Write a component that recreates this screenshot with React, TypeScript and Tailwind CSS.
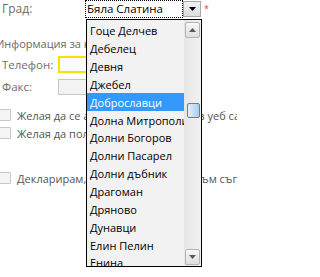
const cities = [
  "Гоце Делчев",
  "Дебелец",
  "Девня",
  "Джебел",
  "Доброславци",
  "Долна Митрополия",
  "Долни Богоров",
  "Долни Пасарел",
  "Долни дъбник",
  "Драгоман",
  "Дряново",
  "Дунавци",
  "Елин Пелин",
  "Енина",
]

function Triangle({ up, color }: { up?: boolean; color: string }) {
  return (
    <svg width="7" height="4" viewBox="0 0 7 4">
      <polygon points={up ? "0,4 7,4 3.5,0" : "0,0 7,0 3.5,4"} fill={color} />
    </svg>
  )
}

function ScrollButton({ up }: { up?: boolean }) {
  return (
    <div className="flex h-[16px] w-[15px] items-center justify-center rounded-[2px] border border-[#b4b4b4] bg-gradient-to-b from-[#f7f7f7] to-[#dedede]">
      <Triangle up={up} color="#5a5a5a" />
    </div>
  )
}

function Checkbox() {
  return <div className="ml-[-2px] h-[12px] w-[13px] shrink-0 rounded-[1px] border border-[#c9c9c9] bg-[#f5f5f5]" />
}

export default function App() {
  return (
    <div className="relative h-[277px] w-[237px] overflow-hidden bg-white font-['Open_Sans',sans-serif] text-[11px] leading-none">
      {/* Град row */}
      <div className="flex h-[18px] items-center">
        <span className="w-[85px] pl-[2px] text-[12px] text-[#6e6e6e]">Град:</span>
        <div className="flex h-[18px] w-[98px] items-center border border-dotted border-black pl-[1px] text-[11.5px] text-black">
          Бяла Слатина
        </div>
        <div className="flex h-[16px] w-[18px] items-center justify-center border border-[#a8a8a8] bg-gradient-to-b from-[#f2f2f2] to-[#dcdcdc]">
          <Triangle color="#000" />
        </div>
        <span className="ml-[3px] self-start pt-[4px] text-[9px] text-[#e8403a]">*</span>
      </div>

      {/* Contact info */}
      <div className="ml-[-4px] mt-[20px] text-[11px] text-[#6a6a6a]">Информация за контакт</div>

      <div className="mt-[7px] flex h-[17px] items-center">
        <span className="w-[58px] pl-[2px] text-[11.5px] text-[#6e6e6e]">Телефон:</span>
        <div className="h-[17px] w-[130px] border-2 border-[#f3e400] bg-[#fbfbfb]" />
      </div>
      <div className="mt-[6px] flex h-[16px] items-center">
        <span className="w-[58px] pl-[2px] text-[11.5px] text-[#6e6e6e]">Факс:</span>
        <div className="h-[16px] w-[130px] border border-[#c6c6c6] bg-[#f3f3f3]" />
      </div>

      <div className="mt-[14px] flex items-center gap-[6px] whitespace-nowrap text-[#555]">
        <Checkbox />
        <span>Желая да се абонирам за новини в уеб сайта</span>
      </div>
      <div className="mt-[6px] flex items-center gap-[6px] whitespace-nowrap text-[#555]">
        <Checkbox />
        <span>Желая да получавам известия</span>
      </div>
      <div className="mt-[33px] flex items-center gap-[6px] whitespace-nowrap text-[#555]">
        <Checkbox />
        <span>Декларирам, че съм запозната и съм съгласна</span>
      </div>

      {/* Open dropdown list */}
      <div className="absolute left-[86px] top-[19px] flex h-[248px] w-[116px] border border-black bg-[#f2f2f2]">
        <div className="flex-1 overflow-hidden pt-[2px]">
          {cities.map((c) => (
            <div
              key={c}
              className={
                c === "Доброславци"
                  ? "flex h-[17.85px] items-center whitespace-nowrap bg-[#3399ff] pl-[3px] text-white"
                  : "flex h-[17.85px] items-center whitespace-nowrap pl-[3px] text-black"
              }
            >
              {c}
            </div>
          ))}
        </div>
        <div className="flex w-[17px] flex-col bg-gradient-to-r from-[#e6e6e6] to-[#f1f1f1] px-[1px] pb-[1px] pt-[2px]">
          <ScrollButton up />
          <div className="flex-1 pt-[65px]">
            <div className="ml-[2px] h-[15px] w-[13px] rounded-[2px] border border-[#4a86b8] bg-gradient-to-r from-[#e3f0fb] to-[#a9cdea]" />
          </div>
          <ScrollButton />
        </div>
      </div>
    </div>
  )
}
